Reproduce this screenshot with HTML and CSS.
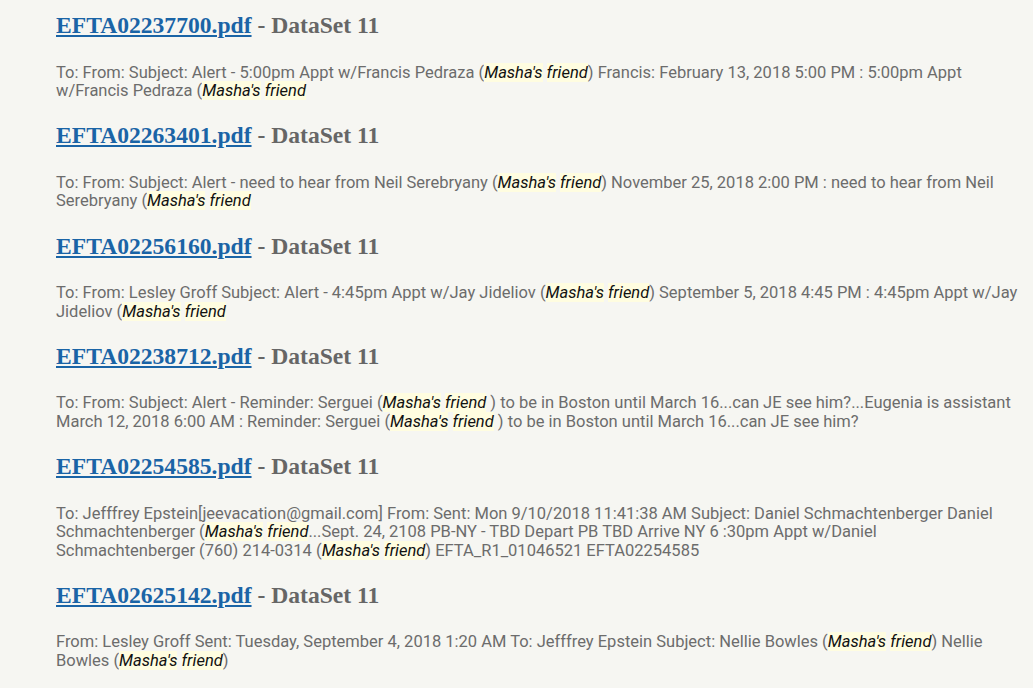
FILE: index.html
```html
<!DOCTYPE html>
<html lang="en">
<head>
    <meta charset="UTF-8">
    <meta name="viewport" content="width=device-width, initial-scale=1.0">
    <title>Search Results</title>
    <link rel="stylesheet" href="styles.css">
</head>
<body>
    <div class="results">
        <div class="result">
            <h3 class="result-title"><a href="#">EFTA02237700.pdf</a> - DataSet 11</h3>
            <p class="result-snippet">To: From: Subject: Alert - 5:00pm Appt w/Francis Pedraza (<mark>Masha's</mark> <mark>friend</mark>) Francis: February 13, 2018 5:00 PM : 5:00pm Appt w/Francis Pedraza (<mark>Masha's</mark> <mark>friend</mark></p>
        </div>
        <div class="result">
            <h3 class="result-title"><a href="#">EFTA02263401.pdf</a> - DataSet 11</h3>
            <p class="result-snippet">To: From: Subject: Alert - need to hear from Neil Serebryany (<mark>Masha's</mark> <mark>friend</mark>) November 25, 2018 2:00 PM : need to hear from Neil Serebryany (<mark>Masha's</mark> <mark>friend</mark></p>
        </div>
        <div class="result">
            <h3 class="result-title"><a href="#">EFTA02256160.pdf</a> - DataSet 11</h3>
            <p class="result-snippet">To: From: Lesley Groff Subject: Alert - 4:45pm Appt w/Jay Jideliov (<mark>Masha's</mark> <mark>friend</mark>) September 5, 2018 4:45 PM : 4:45pm Appt w/Jay Jideliov (<mark>Masha's</mark> <mark>friend</mark></p>
        </div>
        <div class="result">
            <h3 class="result-title"><a href="#">EFTA02238712.pdf</a> - DataSet 11</h3>
            <p class="result-snippet">To: From: Subject: Alert - Reminder: Serguei (<mark>Masha's</mark> <mark>friend</mark> ) to be in Boston until March 16...can JE see him?...Eugenia is assistant March 12, 2018 6:00 AM : Reminder: Serguei (<mark>Masha's</mark> <mark>friend</mark> ) to be in Boston until March 16...can JE see him?</p>
        </div>
        <div class="result">
            <h3 class="result-title"><a href="#">EFTA02254585.pdf</a> - DataSet 11</h3>
            <p class="result-snippet">To: Jefffrey Epstein[jeevacation@gmail.com] From: Sent: Mon 9/10/2018 11:41:38 AM Subject: Daniel Schmachtenberger Daniel Schmachtenberger (<mark>Masha's</mark> <mark>friend</mark>...Sept. 24, 2108 PB-NY - TBD Depart PB TBD Arrive NY 6 :30pm Appt w/Daniel Schmachtenberger (760) 214-0314 (<mark>Masha's</mark> <mark>friend</mark>) EFTA_R1_01046521 EFTA02254585</p>
        </div>
        <div class="result">
            <h3 class="result-title"><a href="#">EFTA02625142.pdf</a> - DataSet 11</h3>
            <p class="result-snippet">From: Lesley Groff Sent: Tuesday, September 4, 2018 1:20 AM To: Jefffrey Epstein Subject: Nellie Bowles (<mark>Masha's</mark> <mark>friend</mark>) Nellie Bowles (<mark>Masha's</mark> <mark>friend</mark>)</p>
        </div>
    </div>
</body>
</html>
```

FILE: styles.css
```css
:root {
    --background-color: #f6f6f2;
    --link-color: #1a64a6;
    --muted-color: #666666;
    --text-color: #6c6c6c;
    --mark-bg: #fffde0;
}

* {
    box-sizing: border-box;
    margin: 0;
    padding: 0;
}

body {
    background-color: var(--background-color);
    font-family: Roboto, 'Liberation Sans', sans-serif;
}

.results {
    padding: 10px 15px 0 56px;
}

.result {
    padding-bottom: 19.8px;
}

.result-title {
    font-family: 'Liberation Serif', serif;
    font-size: 23.6px;
    font-weight: 700;
    line-height: 30px;
    color: var(--muted-color);
    margin-bottom: 23.5px;
}

.result-title a {
    color: var(--link-color);
}

.result-snippet {
    font-size: 16.5px;
    line-height: 18.5px;
    color: var(--text-color);
}

mark {
    background-color: var(--mark-bg);
    color: #111;
    font-style: italic;
}
```
